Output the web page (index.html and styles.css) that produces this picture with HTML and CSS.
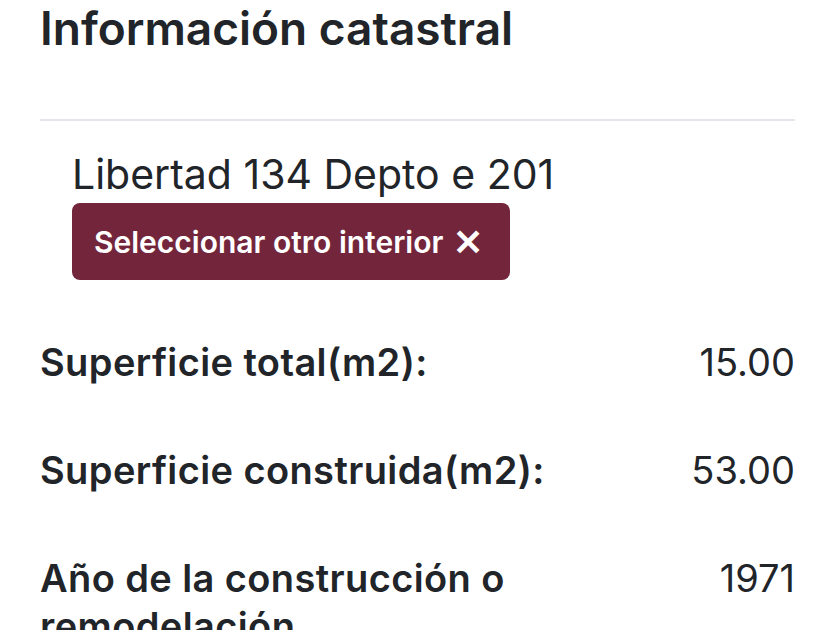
FILE: index.html
```html
<!DOCTYPE html>
<html lang="es">
<head>
    <meta charset="UTF-8">
    <meta name="viewport" content="width=device-width, initial-scale=1.0">
    <title>Información catastral</title>
    <link rel="stylesheet" href="styles.css">
</head>
<body>
    <section class="panel">
        <h2 class="title">Información catastral</h2>
        <hr class="divider">
        <div class="unit">
            <p class="address">Libertad 134 Depto e 201</p>
            <button class="btn-change" type="button">Seleccionar otro interior <span class="close">&#x2715;</span></button>
        </div>
        <div class="info">
            <div class="row">
                <span class="label">Superficie total(m2):</span>
                <span class="value">15.00</span>
            </div>
            <div class="row">
                <span class="label">Superficie construida(m2):</span>
                <span class="value">53.00</span>
            </div>
            <div class="row">
                <span class="label">Año de la construcción o remodelación</span>
                <span class="value">1971</span>
            </div>
        </div>
    </section>
</body>
</html>
```

FILE: styles.css
```css
body {
    margin: 0px;
    background: white;
    color: #212529;
    font-family: Inter, "Noto Sans", sans-serif;
}
.panel {
    width: 755px;
    padding-left: 40px;
}
.title {
    margin: 0px;
    font-size: 46px;
    font-weight: 600;
    line-height: 56px;
}
.divider {
    margin: 63px 0px 0px 0px;
    border: none;
    border-top: 2px solid #e3e6ea;
}
.unit {
    padding: 28px 32px 0px;
}
.address {
    margin: 0px;
    font-size: 41px;
    line-height: 50px;
}
.btn-change {
    margin-top: 4px;
    display: flex;
    align-items: center;
    gap: 10px;
    background-color: #73263b;
    color: white;
    border: none;
    border-radius: 8px;
    padding: 0px 22px;
    width: 438px;
    height: 77px;
    font-family: Inter, "Noto Sans", sans-serif;
    font-size: 30px;
    font-weight: 600;
}
.close {
    font-weight: 700;
    font-size: 36px;
    line-height: 30px;
}
.info {
    padding-top: 58px;
}
.row {
    display: flex;
    justify-content: space-between;
    gap: 20px;
    margin-bottom: 60px;
    font-size: 38px;
    line-height: 48px;
}
.label {
    font-weight: 600;
    letter-spacing: 0.4px;
    max-width: 540px;
}
.value {
    text-align: right;
}
```
